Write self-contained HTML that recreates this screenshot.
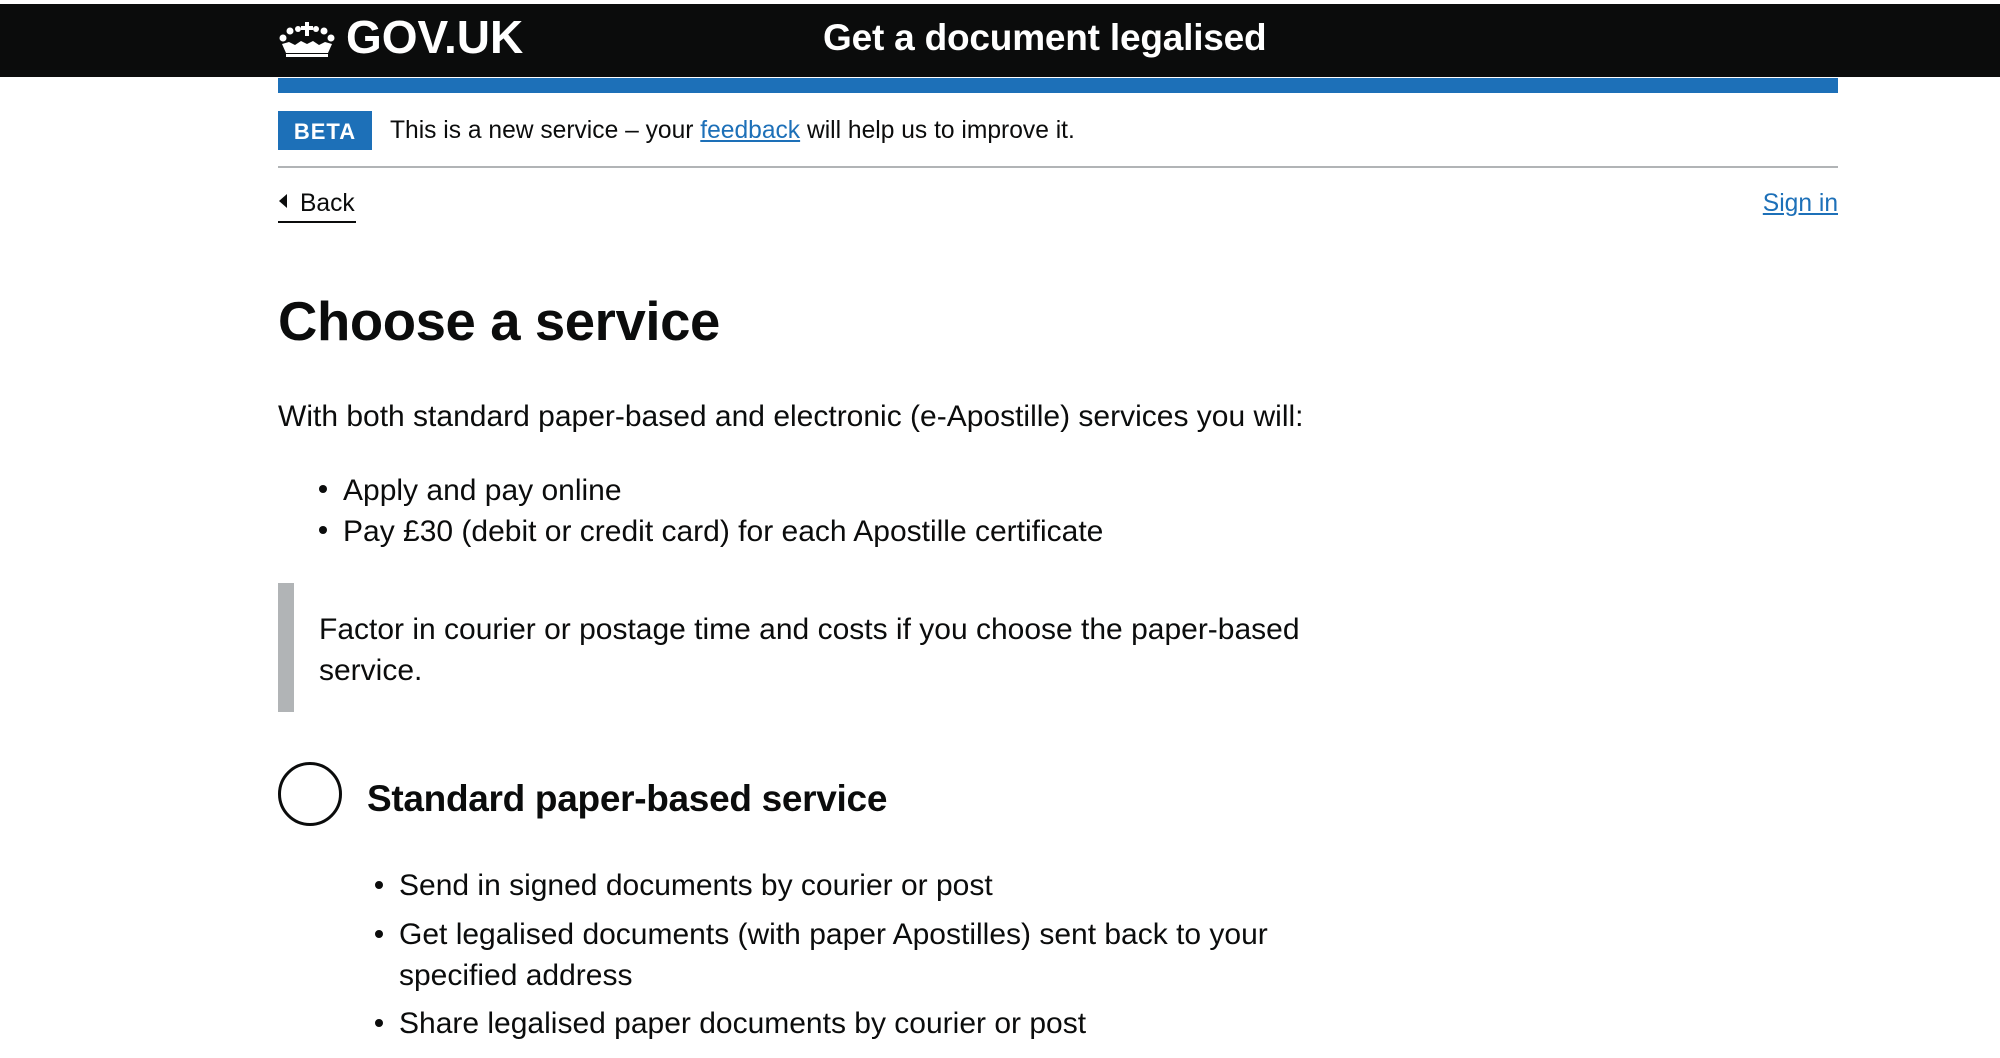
<!DOCTYPE html>
<html><head><meta charset="utf-8"><style>
*{margin:0;padding:0;box-sizing:border-box}
html,body{width:2000px;height:1058px;overflow:hidden;background:#fff}
body{font-family:"Liberation Sans",Arial,sans-serif;color:#0b0c0c;position:relative}
.a{position:absolute;line-height:1;white-space:nowrap}
.b{font-size:30px}
.dot{position:absolute;width:8px;height:8px;border-radius:50%;background:#0b0c0c}
a{color:#1d70b8;text-decoration:underline}
</style></head><body>
<div style="position:absolute;left:0;top:4px;width:2000px;height:73px;background:#0b0c0c"></div>
<svg style="position:absolute;left:277px;top:20px" width="60" height="38" viewBox="0 0 60 38">
<g fill="#fff">
<rect x="28" y="2" width="4" height="14"/><rect x="24" y="6" width="12" height="4"/>
<circle cx="6" cy="18" r="3.5"/><circle cx="13" cy="11" r="3.5"/><circle cx="21" cy="9" r="3"/>
<circle cx="39" cy="9" r="3"/><circle cx="47" cy="11" r="3.5"/><circle cx="54" cy="18" r="3.5"/>
<path d="M5 24 L12 22 L18 25 L24 21 L30 24 L36 21 L42 25 L48 22 L55 24 L51 33 L9 33 Z"/>
<rect x="9" y="34" width="42" height="3"/>
</g></svg>
<div class="a" style="left:346px;top:14px;font-size:46px;font-weight:bold;color:#fff">GOV.UK</div>
<div class="a" style="left:823px;top:19px;font-size:37px;font-weight:bold;color:#fff;letter-spacing:-0.2px">Get a document legalised</div>
<div style="position:absolute;left:278px;top:78px;width:1560px;height:15px;background:#1d70b8"></div>
<div style="position:absolute;left:278px;top:111px;width:94px;height:39px;background:#1d70b8"></div>
<div class="a" style="left:278px;top:121px;width:94px;text-align:center;font-size:22px;font-weight:bold;color:#fff;letter-spacing:1px">BETA</div>
<div class="a" style="left:390px;top:119px;font-size:24.6px">This is a new service – your <a href="#">feedback</a> will help us to improve it.</div>
<div style="position:absolute;left:278px;top:166px;width:1560px;height:2px;background:#b1b4b6"></div>
<svg style="position:absolute;left:278px;top:194px" width="10" height="14"><path d="M9 0 L9 14 L1 7 Z" fill="#0b0c0c"/></svg>
<div class="a" style="left:300px;top:192px;font-size:24.6px">Back</div>
<div style="position:absolute;left:278px;top:221px;width:78px;height:2px;background:#0b0c0c"></div>
<div class="a" style="left:1750px;top:192px;font-size:24.6px;width:88px;text-align:right"><a href="#">Sign in</a></div>
<div class="a" style="left:278px;top:295px;font-size:54.5px;font-weight:bold;letter-spacing:-0.4px">Choose a service</div>
<div class="a b" style="left:278px;top:402px">With both standard paper-based and electronic (e-Apostille) services you will:</div>
<div class="dot" style="left:319px;top:485px"></div>
<div class="a b" style="left:343px;top:476px">Apply and pay online</div>
<div class="dot" style="left:319px;top:526px"></div>
<div class="a b" style="left:343px;top:517px">Pay £30 (debit or credit card) for each Apostille certificate</div>
<div style="position:absolute;left:278px;top:583px;width:16px;height:129px;background:#b1b4b6"></div>
<div class="a b" style="left:319px;top:615px">Factor in courier or postage time and costs if you choose the paper-based</div>
<div class="a b" style="left:319px;top:656px">service.</div>
<div style="position:absolute;left:278px;top:762px;width:64px;height:64px;border:3px solid #0b0c0c;border-radius:50%"></div>
<div class="a" style="left:367px;top:780px;font-size:37px;font-weight:bold;letter-spacing:-0.3px">Standard paper-based service</div>
<div class="dot" style="left:375px;top:881px"></div>
<div class="a b" style="left:399px;top:871px">Send in signed documents by courier or post</div>
<div class="dot" style="left:375px;top:930px"></div>
<div class="a b" style="left:399px;top:920px">Get legalised documents (with paper Apostilles) sent back to your</div>
<div class="a b" style="left:399px;top:961px">specified address</div>
<div class="dot" style="left:375px;top:1019px"></div>
<div class="a b" style="left:399px;top:1009px">Share legalised paper documents by courier or post</div>
</body></html>
